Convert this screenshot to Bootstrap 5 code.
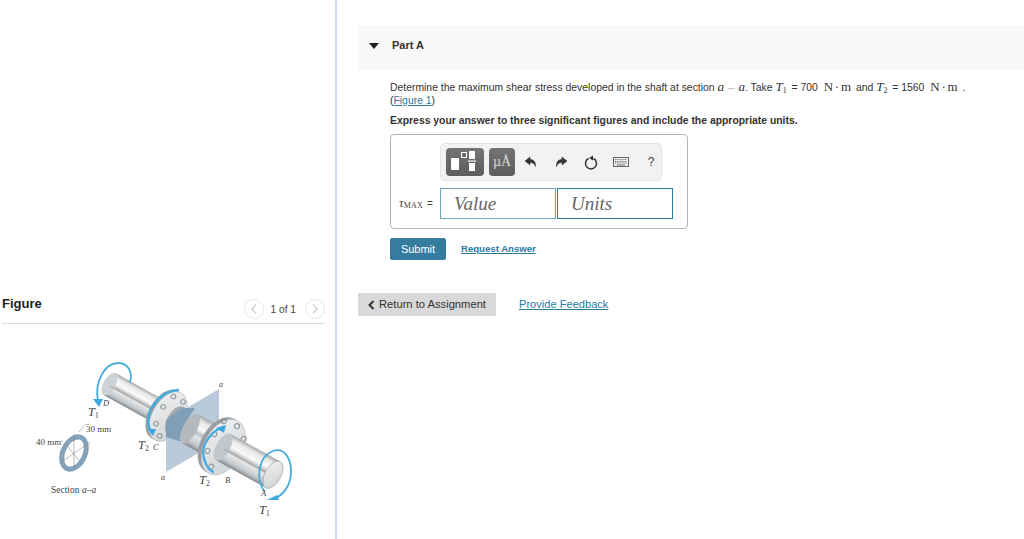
<!DOCTYPE html>
<html lang="en">
<head>
<meta charset="utf-8">
<title>Part A</title>
<link href="https://cdn.jsdelivr.net/npm/bootstrap@5.3.0/dist/css/bootstrap.min.css" rel="stylesheet">
<style>
html,body{height:100%;overflow:hidden}
body{font-family:"Liberation Sans",Arial,sans-serif;font-size:11px;color:#333;background:#fff}
a{color:#2b7a9f}
.figpane{width:337px;height:539px;border-right:2px solid #c9d8ea;padding:296px 10px 0 2px;flex:none}
.fighead{height:28px;border-bottom:1px solid #d9dde0}
.figtitle{font-size:13px;font-weight:700;color:#222;line-height:16px}
.pager{font-size:10.2px;color:#444;padding-top:3px}
.pagecount{margin:2px 9px 0 7px}
.pgbtn{width:20px;height:20px;border:1px solid #e6e6e6;border-radius:50%;display:flex;align-items:center;justify-content:center;background:#fff}
.figsvg{display:block;margin:16px 0 0 -2px}
.mainpane{padding:26px 0 0 21px;min-width:0}
.parthead{height:44px;background:#f9f9f9;border-top:1px solid #f1f1f1;padding:0 0 6px 11px}
.partname{font-size:11px;font-weight:700;color:#333;margin-left:13px}
.qbody{padding:10px 0 0 32px;line-height:13px;font-size:10.4px;color:#333}
.qbody p{margin:0}
.mi{font-family:"Liberation Serif",serif;font-style:italic;font-size:13px}
.mi sub{font-size:8px;font-style:normal;bottom:-.3em}
.mr{font-family:"Liberation Serif",serif;font-size:13px;margin:0 2px 0 3px;word-spacing:-1.500px}
.mdash{font-family:"Liberation Serif",serif;font-size:13px;color:#aaa;margin:0 4px}
.eqv{margin-left:2px}
.instr{font-weight:700;margin-top:7px!important}
.ansbox{width:298px;height:95px;border:1px solid #b4b4b4;border-radius:4px;margin-top:7px;padding:8px 14px 0 8px}
.tools{width:222px;height:38px;background:#f2f2f2;border:1px solid #e3e3e3;border-radius:5px;margin-left:41px;padding-left:5px}
.toolbtn{height:28px;border-radius:4px;background:linear-gradient(#747474,#5c5c5c);flex:none}
.tb1{width:38px}
.tb2{width:26px;margin:0 1px 0 5px;color:#d8d8d8;font-family:"Liberation Serif",serif;font-size:14px;line-height:28px;text-align:center}
.tgl{display:inline-flex;justify-content:center;align-items:center;width:30px;flex:none}
.qm{font-size:12px;color:#444}
.ansrow{margin-top:7px}
.anslabel{width:41px;font-size:10px;color:#444;white-space:nowrap;flex:none}
.anslabel i{font-family:"Liberation Serif",serif;font-size:13px}
.anslabel small{font-family:"Liberation Serif",serif;font-size:8px;vertical-align:-1px;letter-spacing:.2px;margin-right:4px}
.valin.form-control{width:116px;height:31px;border-radius:0;border:1px solid #6ea6bf;padding:0 0 0 13px;font-family:"Liberation Serif",serif;font-style:italic;font-size:19px;box-shadow:none;flex:none}
.valin.form-control::placeholder{color:#666;opacity:1}
.unitin.form-control{border-color:#2f7d9c;margin-left:1px}
.actions{margin-top:9px}
.subbtn.btn{background:#367c9f;border:1px solid #367c9f;color:#fff;font-size:11px;width:56px;height:22px;padding:0;border-radius:2px;line-height:20px}
.reqlink{font-size:9.6px;font-weight:700;margin:0 0 2px 15px}
.bottomrow{margin-top:33px}
.retbtn{width:138px;height:23px;background:#d9d9d9;color:#333;font-size:11.2px;padding-left:10px;gap:4px;text-decoration:none}
.fblink{font-size:11.1px;margin-left:23px}
.lbl{font-family:"Liberation Serif",serif;fill:#444}
.ital{font-style:italic}
</style>
</head>
<body>
<div class="d-flex">
  <aside class="figpane">
    <div class="fighead d-flex justify-content-between align-items-start">
      <div class="figtitle">Figure</div>
      <div class="pager d-flex align-items-center">
        <span class="pgbtn"><svg width="8" height="12" viewBox="0 0 8 12"><path d="M6 1.500 2 6l4 4.500" fill="none" stroke="#bbb" stroke-width="1.100"/></svg></span>
        <span class="pagecount">1 of 1</span>
        <span class="pgbtn"><svg width="8" height="12" viewBox="0 0 8 12"><path d="M2 1.500 6 6l-4 4.500" fill="none" stroke="#bbb" stroke-width="1.100"/></svg></span>
      </div>
    </div>
    <svg class="figsvg" width="330" height="199" viewBox="0 340 330 199">
      <defs>
        <linearGradient id="steel" x1="0" y1="0" x2="0" y2="1">
          <stop offset="0" stop-color="#a4a8ab"/><stop offset=".15" stop-color="#e8e9ea"/><stop offset=".38" stop-color="#fafafa"/><stop offset=".52" stop-color="#bcbfc2"/><stop offset=".62" stop-color="#e4e5e6"/><stop offset=".85" stop-color="#c6c9cb"/><stop offset="1" stop-color="#868a8e"/>
        </linearGradient>
        <linearGradient id="face" x1="0" y1="0" x2="1" y2="1">
          <stop offset="0" stop-color="#f0f1f2"/><stop offset="1" stop-color="#cfd2d4"/>
        </linearGradient>
        <filter id="soft" x="-5%" y="-5%" width="110%" height="110%"><feGaussianBlur stdDeviation=".35"/></filter>
      </defs>
      <g filter="url(#soft)">
        <g transform="rotate(25 74 453)">
          <ellipse cx="74" cy="453" rx="11" ry="17" fill="none" stroke="#84a3bb" stroke-width="5"/>
        </g>
        <g stroke="#777" stroke-width=".5" fill="none">
          <path d="M60 463 90 442M74 434v34M66 444l14 18M79 432l6-7 5-1M63 442l-2-2"/>
        </g>
        <g transform="translate(109.500 384) rotate(29)">
          <rect x="0" y="-12.500" width="62" height="25" fill="url(#steel)"/>
          <ellipse cx="0" cy="0" rx="6" ry="12.500" fill="#cfd2d4"/>
          <path d="M2 1.500H60" stroke="#777" stroke-width=".5"/>
          <ellipse cx="63" cy="0" rx="16" ry="27" fill="#9a9ea2"/>
          <ellipse cx="67" cy="0" rx="16" ry="27" fill="url(#face)" stroke="#a4a8ab" stroke-width=".5"/>
          <g fill="none" stroke="#8b9094" stroke-width="1">
            <circle cx="62" cy="-20" r="2.300"/><circle cx="73" cy="-20" r="2.300"/><circle cx="58" cy="-6" r="2.300"/><circle cx="60" cy="12" r="2.300"/><circle cx="69" cy="21" r="2.300"/>
          </g>
          <ellipse cx="76" cy="0" rx="9" ry="16" fill="#a4a8ab"/>
          <rect x="78" y="-14" width="18" height="28" fill="url(#steel)"/>
        </g>
        <polygon points="219,389 219,441 166,472 166,420" fill="#b9cbda"/>
        <polygon points="166,420 182,408 195,408 183,427 182,442 166,437" fill="#7f9fb9"/>
        <g transform="translate(109.500 384) rotate(29)">
          <rect x="92" y="-16.500" width="38" height="33" fill="url(#steel)"/>
          <ellipse cx="92" cy="0" rx="7" ry="16.500" fill="#b5b9bc"/>
          <ellipse cx="126" cy="0" rx="19" ry="30" fill="#9a9ea2"/>
          <ellipse cx="130" cy="0" rx="19" ry="30" fill="url(#face)" stroke="#a4a8ab" stroke-width=".5"/>
          <g fill="none" stroke="#8b9094" stroke-width="1">
            <circle cx="118" cy="-23" r="2.500"/><circle cx="132" cy="-25" r="2.500"/><circle cx="144" cy="-17" r="2.500"/><circle cx="116" cy="-7" r="2.500"/><circle cx="118" cy="11" r="2.500"/><circle cx="129" cy="23" r="2.500"/>
          </g>
          <rect x="130" y="-15" width="57" height="30" fill="url(#steel)"/>
          <ellipse cx="130" cy="0" rx="7" ry="15" fill="#c4c7ca"/>
          <path d="M132 1.500H185" stroke="#777" stroke-width=".5"/>
          <ellipse cx="187" cy="0" rx="8" ry="15" fill="url(#face)" stroke="#8b9094" stroke-width=".5"/>
        </g>
        <g fill="none" stroke="#45ace0" stroke-width="1.800" stroke-linecap="round">
          <path d="M98 401C94 380 106 363 118 363C128 363 133 372 130 382"/>
          <path d="M178 390C162 391 149 406 148 420C148 426 150 430 152 433" stroke-width="2.300"/>
          <path d="M223 427C211 431 203 444 203 453C204 462 208 469 213 472" stroke-width="2.300"/>
          <path d="M264 491C255 478 259 456 273 451C284 447 291 458 291 471C291 486 283 495 274 499"/>
        </g>
        <g fill="#3ea8df">
          <polygon points="93,399 103,399 99,407"/><polygon points="148,429 156,429 153,436"/><polygon points="216,428 226,425 224,433"/><polygon points="277,495 279,500 267,500"/>
        </g>
      </g>
      <g class="lbl">
        <text x="88" y="416" font-size="12.500" class="ital">T<tspan font-size="7.500" dy="2" font-style="normal">1</tspan></text>
        <text x="103" y="406" font-size="8.500" class="ital">D</text>
        <text x="86" y="432" font-size="9">30 mm</text>
        <text x="36" y="445" font-size="9">40 mm</text>
        <text x="138" y="449" font-size="12.500" class="ital">T<tspan font-size="7.500" dy="2" font-style="normal">2</tspan></text>
        <text x="153" y="450" font-size="8.500" class="ital">C</text>
        <text x="219" y="387" font-size="8" class="ital">a</text>
        <text x="161" y="480" font-size="8" class="ital">a</text>
        <text x="199" y="484" font-size="12.500" class="ital">T<tspan font-size="7.500" dy="2" font-style="normal">2</tspan></text>
        <text x="225" y="483" font-size="8.500" class="ital">B</text>
        <text x="261" y="496" font-size="8.500" class="ital">A</text>
        <text x="259" y="514" font-size="12.500" class="ital">T<tspan font-size="7.500" dy="2" font-style="normal">1</tspan></text>
        <text x="51" y="493" font-size="9.500">Section <tspan class="ital">a–a</tspan></text>
      </g>
    </svg>
  </aside>
  <main class="mainpane flex-grow-1">
    <div class="parthead d-flex align-items-center">
      <svg width="10" height="6" viewBox="0 0 10 6"><polygon points="0,0 10,0 5,6" fill="#222"/></svg>
      <span class="partname">Part A</span>
    </div>
    <div class="qbody">
      <p>Determine the maximum shear stress developed in the shaft at section <span class="mi">a</span><span class="mdash">–</span><span class="mi">a</span>. Take <span class="mi">T<sub>1</sub></span><span class="eqv"> = 700</span> <span class="mr">N · m</span> and <span class="mi">T<sub>2</sub></span><span class="eqv"> = 1560</span> <span class="mr">N · m</span> .<br>(<a href="#">Figure 1</a>)</p>
      <p class="instr">Express your answer to three significant figures and include the appropriate units.</p>
      <div class="ansbox">
        <div class="tools d-flex align-items-center">
          <div class="toolbtn tb1">
            <svg class="d-block" width="38" height="28" viewBox="0 0 38 28"><rect x="5" y="10" width="8" height="12" fill="#fff"/><rect x="15.500" y="4.500" width="5" height="5" fill="none" stroke="#fff"/><rect x="23" y="3" width="6" height="8" fill="#fff"/><rect x="22" y="12.500" width="8" height="1.200" fill="#fff"/><rect x="23" y="15" width="6" height="8" fill="#fff"/></svg>
          </div>
          <div class="toolbtn tb2">µÅ</div>
          <span class="tgl"><svg width="14" height="12" viewBox="0 0 14 12"><path d="M6 1 1 5l5 4V6.500c3 0 4.500 1.500 5.500 4 .5-4-1.500-7-5.500-7.200z" fill="#333" stroke="#333" stroke-width=".5"/></svg></span>
          <span class="tgl"><svg width="14" height="12" viewBox="0 0 14 12"><path d="M8 1l5 4-5 4V6.500c-3 0-4.500 1.500-5.500 4-.5-4 1.500-7 5.500-7.200z" fill="#333" stroke="#333" stroke-width=".5"/></svg></span>
          <span class="tgl"><svg width="14" height="15" viewBox="0 0 14 15"><path d="M4.500 3.500a5.500 5.500 0 1 0 5 0" fill="none" stroke="#333" stroke-width="1.500"/><polygon points="7.500,0 7.500,5 3.500,2.500" fill="#333" transform="translate(1.500 .5)"/></svg></span>
          <span class="tgl"><svg width="16" height="10" viewBox="0 0 16 10"><rect x=".5" y=".5" width="15" height="9" fill="#eee" stroke="#666"/><path d="M2 2.500h12M2 4.500h12M2 6h12" stroke="#777" stroke-dasharray="1 .7"/><path d="M4 8h8" stroke="#777"/></svg></span>
          <span class="tgl qm">?</span>
        </div>
        <div class="ansrow d-flex align-items-center">
          <div class="anslabel"><i>τ</i><small>MAX</small>=</div>
          <input class="form-control valin" type="text" placeholder="Value" aria-label="Value">
          <input class="form-control valin unitin" type="text" placeholder="Units" aria-label="Units">
        </div>
      </div>
      <div class="actions d-flex align-items-center">
        <button class="btn subbtn" type="button">Submit</button>
        <a class="reqlink" href="#">Request Answer</a>
      </div>
    </div>
    <div class="bottomrow d-flex align-items-center">
      <a class="retbtn d-flex align-items-center" href="#"><svg width="7" height="10" viewBox="0 0 7 10"><path d="M5.500 1 1.500 5l4 4" fill="none" stroke="#333" stroke-width="2"/></svg>Return to Assignment</a>
      <a class="fblink" href="#">Provide Feedback</a>
    </div>
  </main>
</div>
</body>
</html>
